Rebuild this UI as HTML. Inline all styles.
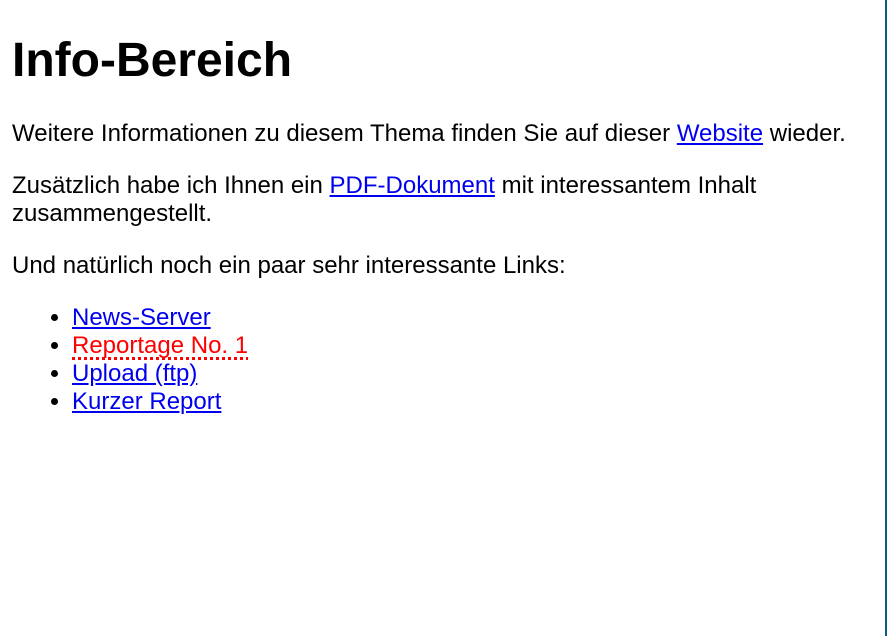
<!DOCTYPE html>
<html><head><meta charset="utf-8"><style>
html,body{margin:0;padding:0;background:#fff;}
body{font-family:"Liberation Sans",Arial,sans-serif;font-size:24px;color:#000;padding:33px 0 0 12px;width:873px;height:603px;border-right:2px solid #0b5a8a;box-sizing:content-box;overflow:hidden;}
h1{font-size:48px;font-weight:bold;margin:0 0 32px 0;line-height:55px;}
p{margin:24px 0;line-height:28px;}
ul{margin:24px 0;padding-left:60px;line-height:28px;}
a{color:#0000ee;text-decoration:underline;}
.red{color:#ff0000;text-decoration:underline dotted #ff0000;text-decoration-thickness:3px;text-underline-offset:4px;text-decoration-skip-ink:none;}
</style></head><body>
<h1>Info-Bereich</h1>
<p>Weitere Informationen zu diesem Thema finden Sie auf dieser <a>Website</a> wieder.</p>
<p>Zusätzlich habe ich Ihnen ein <a>PDF-Dokument</a> mit interessantem Inhalt zusammengestellt.</p>
<p>Und natürlich noch ein paar sehr interessante Links:</p>
<ul>
<li><a>News-Server</a></li>
<li><span class="red">Reportage No. 1</span></li>
<li><a>Upload (ftp)</a></li>
<li><a>Kurzer Report</a></li>
</ul>
</body></html>
